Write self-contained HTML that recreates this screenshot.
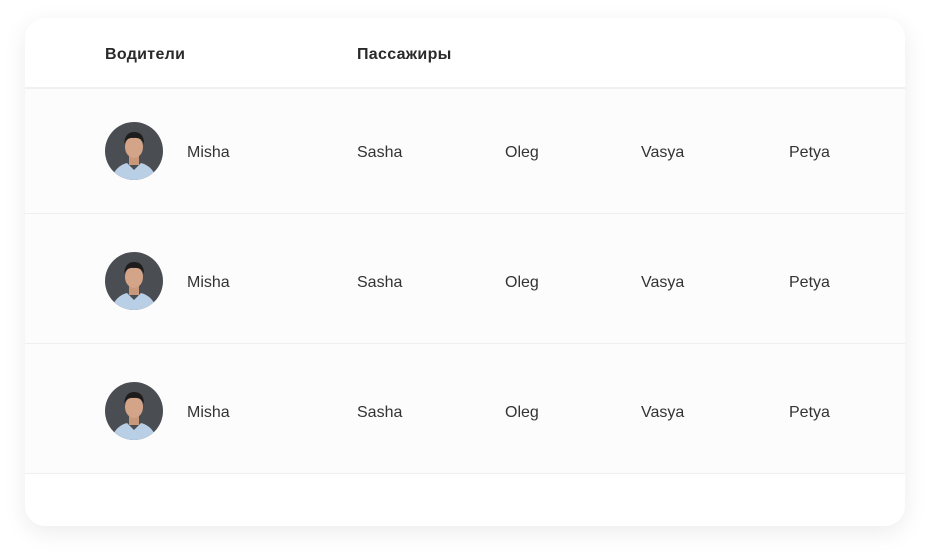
<!DOCTYPE html>
<html><head><meta charset="utf-8"><style>
body{margin:0;width:930px;height:557px;background:#fff;font-family:"Liberation Sans",sans-serif;position:relative;overflow:hidden}
.card{position:absolute;left:25px;top:18px;width:880px;height:508px;background:#fff;border-radius:20px;box-shadow:0 6px 24px rgba(0,0,0,0.08);overflow:hidden}
.hd{position:absolute;top:0;left:0;right:0;height:69px;border-bottom:2px solid #f0f0f0}
.hd span{position:absolute;top:28px;font-weight:bold;font-size:16px;color:#2a2a2a;letter-spacing:0.3px}
.row{position:absolute;left:0;right:0;height:129px;background:#fcfcfc;border-bottom:1px solid #efefef}
.row span{position:absolute;top:60px;font-size:16px;color:#333}
.r1 span{top:55px}
.av{position:absolute;left:80px;top:38px;width:58px;height:58px;border-radius:50%;overflow:hidden}
.r1 .av{top:33px}
</style></head><body>
<div class="card">
<div class="hd"><span style="left:80px">Водители</span><span style="left:332px">Пассажиры</span></div>
<div class="row r1" style="top:71px;height:124px">
<div class="av"><svg width="58" height="58" viewBox="0 0 58 58"><rect width="58" height="58" fill="#4a4d52"/><path d="M6 58 Q10 44 22 41 L29 48 L36 41 Q48 44 52 58Z" fill="#b9cfe6"/><rect x="24" y="33" width="10" height="10" fill="#c9977a"/><ellipse cx="29" cy="25" rx="9" ry="11" fill="#d4a488"/><path d="M19 22 Q20 10 29 10 Q39 10 39 22 Q36 15 29 16 Q22 15 19 22Z" fill="#1e1c1c"/></svg></div>
<span style="left:162px">Misha</span><span style="left:332px">Sasha</span><span style="left:480px">Oleg</span><span style="left:616px">Vasya</span><span style="left:764px">Petya</span></div>
<div class="row" style="top:196px">
<div class="av"><svg width="58" height="58" viewBox="0 0 58 58"><rect width="58" height="58" fill="#4a4d52"/><path d="M6 58 Q10 44 22 41 L29 48 L36 41 Q48 44 52 58Z" fill="#b9cfe6"/><rect x="24" y="33" width="10" height="10" fill="#c9977a"/><ellipse cx="29" cy="25" rx="9" ry="11" fill="#d4a488"/><path d="M19 22 Q20 10 29 10 Q39 10 39 22 Q36 15 29 16 Q22 15 19 22Z" fill="#1e1c1c"/></svg></div>
<span style="left:162px">Misha</span><span style="left:332px">Sasha</span><span style="left:480px">Oleg</span><span style="left:616px">Vasya</span><span style="left:764px">Petya</span></div>
<div class="row" style="top:326px">
<div class="av"><svg width="58" height="58" viewBox="0 0 58 58"><rect width="58" height="58" fill="#4a4d52"/><path d="M6 58 Q10 44 22 41 L29 48 L36 41 Q48 44 52 58Z" fill="#b9cfe6"/><rect x="24" y="33" width="10" height="10" fill="#c9977a"/><ellipse cx="29" cy="25" rx="9" ry="11" fill="#d4a488"/><path d="M19 22 Q20 10 29 10 Q39 10 39 22 Q36 15 29 16 Q22 15 19 22Z" fill="#1e1c1c"/></svg></div>
<span style="left:162px">Misha</span><span style="left:332px">Sasha</span><span style="left:480px">Oleg</span><span style="left:616px">Vasya</span><span style="left:764px">Petya</span></div>
</div>
</body></html>
